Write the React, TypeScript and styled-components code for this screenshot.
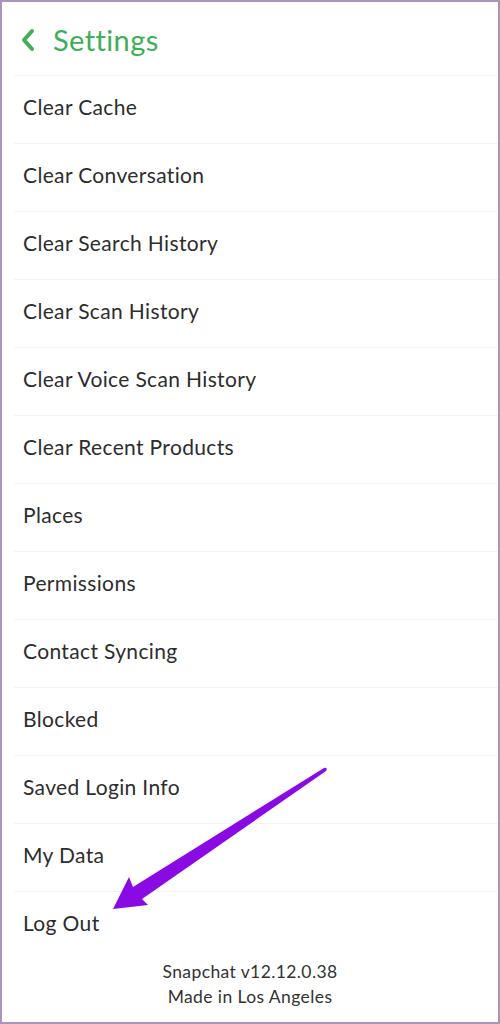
import styled, { createGlobalStyle } from "styled-components";

const GlobalStyle = createGlobalStyle`
  html, body {
    margin: 0;
    padding: 0;
    background: #ffffff;
  }
`;

const items = [
  "Clear Cache",
  "Clear Conversation",
  "Clear Search History",
  "Clear Scan History",
  "Clear Voice Scan History",
  "Clear Recent Products",
  "Places",
  "Permissions",
  "Contact Syncing",
  "Blocked",
  "Saved Login Info",
  "My Data",
  "Log Out",
];

const BackChevron = () => (
  <svg width="16" height="24" viewBox="0 0 16 24">
    <path
      d="M12 3 L4 12 L12 21"
      fill="none"
      stroke="#3daf57"
      strokeWidth="4"
      strokeLinecap="round"
      strokeLinejoin="round"
    />
  </svg>
);

const PointerArrow = () => (
  <svg width="500" height="1024" viewBox="0 0 500 1024">
    <path
      d="M113 909 L129 877 L133 887 L324 768 Q328 767 326 771 L142 899 L148 905 Z"
      fill="#8a0ae4"
    />
  </svg>
);

export default function App() {
  return (
    <Frame>
      <GlobalStyle />
      <Header>
        <BackChevron />
        <Title>Settings</Title>
      </Header>
      <List>
        {items.map((item) => (
          <Row key={item}>{item}</Row>
        ))}
      </List>
      <Footer>
        <div>Snapchat v12.12.0.38</div>
        <div>Made in Los Angeles</div>
      </Footer>
      <ArrowLayer>
        <PointerArrow />
      </ArrowLayer>
    </Frame>
  );
}

const Frame = styled.div`
  position: relative;
  width: 500px;
  height: 1024px;
  box-sizing: border-box;
  border: 2px solid #ab93b9;
  background: #fff;
  overflow: hidden;
  font-family: Lato, "Open Sans", sans-serif;
  color: #2d2d2d;
`;

const Header = styled.div`
  height: 73px;
  display: flex;
  align-items: center;
  gap: 17px;
  padding-left: 18px;
  padding-top: 2px;
  box-sizing: border-box;
`;

const Title = styled.div`
  font-size: 29px;
  color: #3daf57;
  letter-spacing: 0.4px;
`;

const List = styled.div`
  display: flex;
  flex-direction: column;
`;

const Row = styled.div`
  height: 68px;
  box-sizing: border-box;
  border-top: 1px solid #f3f3f3;
  margin-left: 12px;
  padding-left: 9px;
  padding-bottom: 6px;
  display: flex;
  align-items: center;
  font-size: 21px;
  letter-spacing: 0.35px;
`;

const Footer = styled.div`
  display: flex;
  flex-direction: column;
  align-items: center;
  font-size: 17.5px;
  line-height: 25px;
  color: #333;
  letter-spacing: 0.4px;
`;

const ArrowLayer = styled.div`
  position: absolute;
  left: -2px;
  top: -2px;
  pointer-events: none;
`;
